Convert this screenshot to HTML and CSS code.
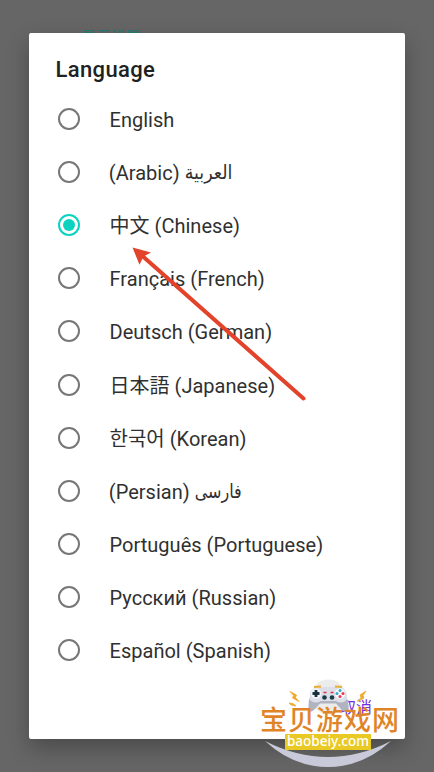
FILE: index.html
```html
<!DOCTYPE html>
<html lang="zh">
<head>
<meta charset="utf-8">
<title>Language</title>
<link rel="stylesheet" href="styles.css">
</head>
<body>
<div class="backdrop-title">显示设置</div>
<main class="dialog">
  <h1 class="title">Language</h1>
  <ul class="list">
    <li class="row"><i class="radio"></i><span class="label">English</span></li>
    <li class="row"><i class="radio"></i><span class="label rtl">(Arabic) <bdi class="arabic">العربية</bdi></span></li>
    <li class="row"><i class="radio on"></i><span class="label">中文 (Chinese)</span></li>
    <li class="row"><i class="radio"></i><span class="label">Français (French)</span></li>
    <li class="row"><i class="radio"></i><span class="label">Deutsch (German)</span></li>
    <li class="row"><i class="radio"></i><span class="label" lang="ja">日本語 (Japanese)</span></li>
    <li class="row"><i class="radio"></i><span class="label korean" lang="ko">한국어 (Korean)</span></li>
    <li class="row"><i class="radio"></i><span class="label rtl">(Persian) <bdi class="arabic persian">فارسی</bdi></span></li>
    <li class="row"><i class="radio"></i><span class="label">Português (Portuguese)</span></li>
    <li class="row"><i class="radio"></i><span class="label">Русский (Russian)</span></li>
    <li class="row"><i class="radio"></i><span class="label">Español (Spanish)</span></li>
  </ul>
  <div class="actions"><span class="cancel">取消</span></div>
</main>
<svg class="arrow" width="434" height="772" viewBox="0 0 434 772">
  <path d="M303.500 398.500L143 256.500" fill="none" stroke="#e2432a" stroke-width="4" stroke-linecap="round"/>
  <path d="M132.500 247.500L151 252.500L143.500 256.500L139.500 264.800Z" fill="#e2432a"/>
</svg>
<div class="watermark">
  <svg class="art" width="140" height="96" viewBox="258 676 140 96">
    <circle cx="328.500" cy="697" r="17.500" fill="#ececec"/>
    <path d="M265 741Q328 773 391 741Q363 767 328 767Q293 767 265 741Z" fill="#c9cad9"/>
    <path d="M315 688L320 687H336L342 688Q347 690 347 697Q349 704 348.500 710Q346 714 341 709L336 703H320L314 709Q309 714 308.500 709Q308 701 310 696Q309 690 315 688Z" fill="#dcdee8"/>
    <path d="M309 699Q314 705 321 701H336Q343 705 347 699Q349 706 348.500 710Q345 714 341 709L336 703.500H320L314 710Q309 714 308.500 709Z" fill="#b0b3c0"/>
    <path d="M314 687L321 686.500M335 686.500L342 687" stroke="#e9ad35" stroke-width="2"/>
    <circle cx="316" cy="693.500" r="5.200" fill="#f4f4f8"/>
    <circle cx="340" cy="693.500" r="5.200" fill="#f8f8fb"/>
    <path d="M312.500 693.500H319.500M316 690V697" stroke="#17303f" stroke-width="2.800"/>
    <circle cx="340" cy="690.500" r="1.500" fill="#35a9c7"/><circle cx="343" cy="693.500" r="1.500" fill="#e23b4f"/>
    <circle cx="337" cy="693.500" r="1.500" fill="#35a9c7"/><circle cx="340" cy="696.500" r="1.500" fill="#e23b4f"/>
    <path d="M323.500 692.500H326.500M330.500 692.500H333.500" stroke="#d8344e" stroke-width="1.500"/>
    <circle cx="324.500" cy="697.500" r="2.300" fill="#1b3b49"/><circle cx="332" cy="697.500" r="2.300" fill="#1b3b49"/>
    <path d="M290 691.500L296.500 695L295.500 697.500L299 701.500L292.500 698L293.500 695.500ZM289 703L293 703.500L296 706L291 705ZM366 691L360 695L361 697.500L357.500 701.500L364 698L363 695.500Z" fill="#efa92c" stroke="#efa92c" stroke-width=".8"/>
  </svg>
  <div class="wm-name">宝贝游戏网</div>
  <div class="wm-site">baobeiy.com</div>
</div>
</body>
</html>
```
FILE: styles.css
```css
* { box-sizing: border-box; }
body {
  margin: 0;
  width: 434px;
  height: 772px;
  overflow: hidden;
  position: relative;
  padding: 33px 29px;
  background: #666;
  font-family: Roboto, "Noto Sans CJK SC", sans-serif;
}
.backdrop-title {
  position: absolute;
  left: 81px;
  top: 28px;
  font-size: 15px;
  line-height: 18px;
  color: #237a72;
}
.dialog {
  position: relative;
  width: 376px;
  height: 706px;
  background: #fff;
  border-radius: 2px;
  box-shadow: 0 9px 22px rgba(0, 0, 0, .28);
  display: flex;
  flex-direction: column;
}
.title {
  margin: 0;
  height: 59.500px;
  padding: 22px 0 0 26.500px;
  font-size: 22px;
  line-height: 30px;
  font-weight: 500;
  letter-spacing: .36px;
  color: #212121;
}
.list { list-style: none; margin: 0; padding: 0; }
.row {
  height: 53.100px;
  display: flex;
  align-items: center;
  padding-left: 29px;
}
.radio {
  width: 22px;
  height: 22px;
  border: 2px solid #777;
  border-radius: 50%;
  margin-right: 29.500px;
  display: grid;
  place-items: center;
}
.radio.on { border-color: #0cd3c0; }
.radio.on::after {
  content: "";
  width: 12px;
  height: 12px;
  border-radius: 50%;
  background: #0cd3c0;
}
.label {
  font-size: 20px;
  line-height: 24px;
  letter-spacing: .02px;
  color: #303030;
  white-space: nowrap;
  padding-top: 2px;
}
.label.rtl { margin-left: -.7px; }
.label[lang="ja"] { font-family: Roboto, "Noto Sans CJK JP", sans-serif; }
.label.korean { font-family: Roboto, "Noto Sans CJK KR", sans-serif; }
.arabic {
  display: inline-block;
  font-family: "Noto Sans", "DejaVu Sans", sans-serif;
  font-size: 17.500px;
  line-height: 20px;
  letter-spacing: 0;
  transform: translateY(-2px) scaleY(1.1);
}
.arabic.persian { font-size: 16px; transform: translateY(-2px) scaleY(1.2); }
.actions {
  display: flex;
  justify-content: flex-end;
  padding: 19px 33px 0 0;
}
.cancel { font-size: 16px; line-height: 24px; color: #7430df; }
.arrow { position: absolute; left: 0; top: 0; }
.watermark { position: absolute; left: 258px; top: 676px; width: 142px; height: 96px; }
.art { position: absolute; left: 0; top: 0; }
.wm-name {
  position: absolute;
  left: 2px;
  top: 28px;
  font-size: 27px;
  line-height: 34px;
  font-weight: 500;
  letter-spacing: 1px;
  white-space: nowrap;
  color: #df8528;
}
.wm-site {
  position: absolute;
  left: 27px;
  top: 58px;
  width: 86px;
  height: 16px;
  background: #e9c923;
  color: #fff;
  font: 500 13.500px/14px "Noto Sans", sans-serif;
  text-align: center;
  white-space: nowrap;
}
```
